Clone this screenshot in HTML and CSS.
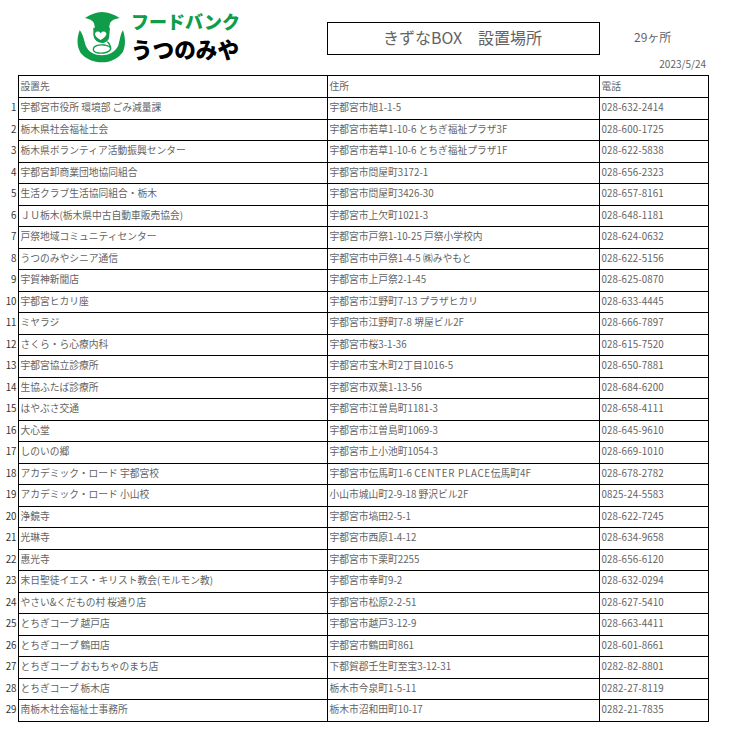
FILE: index.html
```html
<!DOCTYPE html>
<html lang="ja">
<head>
<meta charset="utf-8">
<title>きずなBOX 設置場所</title>
<link rel="stylesheet" href="styles.css">
</head>
<body>
<header class="top">
  <div class="logo">
    <svg class="logo-mark" width="56" height="56" viewBox="0 0 168 168" aria-hidden="true">
      <path class="g" d="M33 27 C50 16 66 10 84 9 C102 10 120 16 137 27 C124 29 114 33 108 42 L104 62 L64 62 L60 42 C54 33 44 29 33 27Z"/>
      <path class="g" d="M17 64 C8 88 8 112 20 132 C34 150 60 160 84 160 C110 160 134 148 147 128 C156 108 154 86 147 64 C138 76 138 96 132 112 C122 130 104 139 84 139 C62 139 44 130 36 112 C30 96 28 76 17 64Z"/>
      <path class="g" d="M58 56 L108 56 L106 78 C106 92 100 100 86 102 C72 102 60 94 58 78Z"/>
      <path class="w" d="M80 93 C66 84 60 76 64 71 C69 66 76 67 80 73 C84 67 91 66 96 71 C100 76 94 84 80 93Z"/>
      <path class="s" d="M100 98 C107 104 110 110 110 119"/>
      <path class="s" d="M58 120 C60 109 76 106 90 108 C103 110 112 114 110 120 C106 130 88 134 74 132 C64 131 57 127 58 120Z"/>
    </svg>
    <div class="logo-text">
      <span class="logo-top">フードバンク</span>
      <span class="logo-bottom">うつのみや</span>
    </div>
  </div>
  <h1 class="title">きずなBOX　設置場所</h1>
  <div class="side">
    <p class="count">29ヶ所</p>
    <p class="date">2023/5/24</p>
  </div>
</header>
<table class="list">
  <colgroup><col class="c-no"><col class="c-name"><col class="c-addr"><col class="c-tel"></colgroup>
  <thead>
    <tr><th class="no"></th><th>設置先</th><th>住所</th><th>電話</th></tr>
  </thead>
  <tbody>
    <tr><td class="no">1</td><td>宇都宮市役所 環境部 ごみ減量課</td><td>宇都宮市旭1-1-5</td><td>028-632-2414</td></tr>
    <tr><td class="no">2</td><td>栃木県社会福祉士会</td><td>宇都宮市若草1-10-6 とちぎ福祉プラザ3F</td><td>028-600-1725</td></tr>
    <tr><td class="no">3</td><td>栃木県ボランティア活動振興センター</td><td>宇都宮市若草1-10-6 とちぎ福祉プラザ1F</td><td>028-622-5838</td></tr>
    <tr><td class="no">4</td><td>宇都宮卸商業団地協同組合</td><td>宇都宮市問屋町3172-1</td><td>028-656-2323</td></tr>
    <tr><td class="no">5</td><td>生活クラブ生活協同組合・栃木</td><td>宇都宮市問屋町3426-30</td><td>028-657-8161</td></tr>
    <tr><td class="no">6</td><td>ＪＵ栃木(栃木県中古自動車販売協会)</td><td>宇都宮市上欠町1021-3</td><td>028-648-1181</td></tr>
    <tr><td class="no">7</td><td>戸祭地域コミュニティセンター</td><td>宇都宮市戸祭1-10-25 戸祭小学校内</td><td>028-624-0632</td></tr>
    <tr><td class="no">8</td><td>うつのみやシニア通信</td><td>宇都宮市中戸祭1-4-5 ㈱みやもと</td><td>028-622-5156</td></tr>
    <tr><td class="no">9</td><td>宇賀神新聞店</td><td>宇都宮市上戸祭2-1-45</td><td>028-625-0870</td></tr>
    <tr><td class="no">10</td><td>宇都宮ヒカリ座</td><td>宇都宮市江野町7-13 プラザヒカリ</td><td>028-633-4445</td></tr>
    <tr><td class="no">11</td><td>ミヤラジ</td><td>宇都宮市江野町7-8 堺屋ビル2F</td><td>028-666-7897</td></tr>
    <tr><td class="no">12</td><td>さくら・ら心療内科</td><td>宇都宮市桜3-1-36</td><td>028-615-7520</td></tr>
    <tr><td class="no">13</td><td>宇都宮協立診療所</td><td>宇都宮市宝木町2丁目1016-5</td><td>028-650-7881</td></tr>
    <tr><td class="no">14</td><td>生協ふたば診療所</td><td>宇都宮市双葉1-13-56</td><td>028-684-6200</td></tr>
    <tr><td class="no">15</td><td>はやぶさ交通</td><td>宇都宮市江曽島町1181-3</td><td>028-658-4111</td></tr>
    <tr><td class="no">16</td><td>大心堂</td><td>宇都宮市江曽島町1069-3</td><td>028-645-9610</td></tr>
    <tr><td class="no">17</td><td>しのいの郷</td><td>宇都宮市上小池町1054-3</td><td>028-669-1010</td></tr>
    <tr><td class="no">18</td><td>アカデミック・ロード 宇都宮校</td><td>宇都宮市伝馬町1-6 <span class="latin">CENTER PLACE</span>伝馬町4F</td><td>028-678-2782</td></tr>
    <tr><td class="no">19</td><td>アカデミック・ロード 小山校</td><td>小山市城山町2-9-18 野沢ビル2F</td><td>0825-24-5583</td></tr>
    <tr><td class="no">20</td><td>浄鏡寺</td><td>宇都宮市塙田2-5-1</td><td>028-622-7245</td></tr>
    <tr><td class="no">21</td><td>光琳寺</td><td>宇都宮市西原1-4-12</td><td>028-634-9658</td></tr>
    <tr><td class="no">22</td><td>惠光寺</td><td>宇都宮市下栗町2255</td><td>028-656-6120</td></tr>
    <tr><td class="no">23</td><td>末日聖徒イエス・キリスト教会<span class="latin">(</span>モルモン教<span class="latin">)</span></td><td>宇都宮市幸町9-2</td><td>028-632-0294</td></tr>
    <tr><td class="no">24</td><td>やさい&amp;くだもの村 桜通り店</td><td>宇都宮市松原2-2-51</td><td>028-627-5410</td></tr>
    <tr><td class="no">25</td><td>とちぎコープ 越戸店</td><td>宇都宮市越戸3-12-9</td><td>028-663-4411</td></tr>
    <tr><td class="no">26</td><td>とちぎコープ 鶴田店</td><td>宇都宮市鶴田町861</td><td>028-601-8661</td></tr>
    <tr><td class="no">27</td><td>とちぎコープ おもちゃのまち店</td><td>下都賀郡壬生町至宝3-12-31</td><td>0282-82-8801</td></tr>
    <tr><td class="no">28</td><td>とちぎコープ 栃木店</td><td>栃木市今泉町1-5-11</td><td>0282-27-8119</td></tr>
    <tr><td class="no">29</td><td>南栃木社会福祉士事務所</td><td>栃木市沼和田町10-17</td><td>0282-21-7835</td></tr>
  </tbody>
</table>
</body>
</html>
```
FILE: styles.css
```css
html, body { margin: 0; padding: 0; background: #fff; }
body {
  width: 738px;
  height: 738px;
  overflow: hidden;
  font-family: "Noto Sans CJK JP", "Liberation Sans", sans-serif;
  color: #636363;
}
.top {
  display: flex;
  height: 75px;
  padding-left: 74px;
  box-sizing: border-box;
}
.logo {
  display: flex;
  width: 253px;
  gap: 1px;
  padding-top: 9px;
  box-sizing: border-box;
}
.logo-mark { flex: none; }
.logo-mark .g { fill: #0f9d4a; }
.logo-mark .w { fill: #fff; }
.logo-mark .s { fill: none; stroke: #0f9d4a; stroke-width: 4; }
.logo-text {
  display: flex;
  flex-direction: column;
  font-weight: 900;
  white-space: nowrap;
}
.logo-top {
  color: #0f9d4a;
  font-size: 18px;
  line-height: 25px;
}
.logo-bottom {
  color: #000;
  font-size: 21.6px;
  line-height: 25px;
  margin-top: 2px;
}
.title {
  box-sizing: border-box;
  width: 273px;
  height: 33px;
  margin: 22px 0 0;
  border: 1px solid #000;
  padding-right: 2px;
  font-size: 16px;
  font-weight: 400;
  line-height: 29px;
  text-align: center;
  color: #636363;
}
.side { flex: 1; display: flex; flex-direction: column; padding-right: 32px; }
.side p { margin: 0; }
.side .count {
  margin-left: 34px;
  padding-top: 28px;
  font-size: 12px;
  line-height: 17px;
}
.side .date {
  align-self: flex-end;
  font-size: 10px;
  line-height: 13px;
  margin-top: 12px;
}
.list {
  border-collapse: collapse;
  table-layout: fixed;
  width: 708px;
  font-size: 9.75px;
}
.c-no { width: 18px; }
.c-name { width: 309px; }
.c-addr { width: 272px; }
.c-tel { width: 109px; }
.list th, .list td {
  border: 1px solid #000;
  padding: 0 0 1px 2px;
  height: 21.5px;
  box-sizing: border-box;
  font-weight: 400;
  text-align: left;
  line-height: 13px;
  white-space: nowrap;
  overflow: hidden;
}
.list td:last-child { letter-spacing: 0.12px; }
.latin { letter-spacing: 0.7px; }
.list th { height: 22px; }
.list .no {
  border: 0;
  border-right: 1px solid #000;
  padding: 0 1px 1px 0;
  text-align: right;
  color: #333;
}
```
